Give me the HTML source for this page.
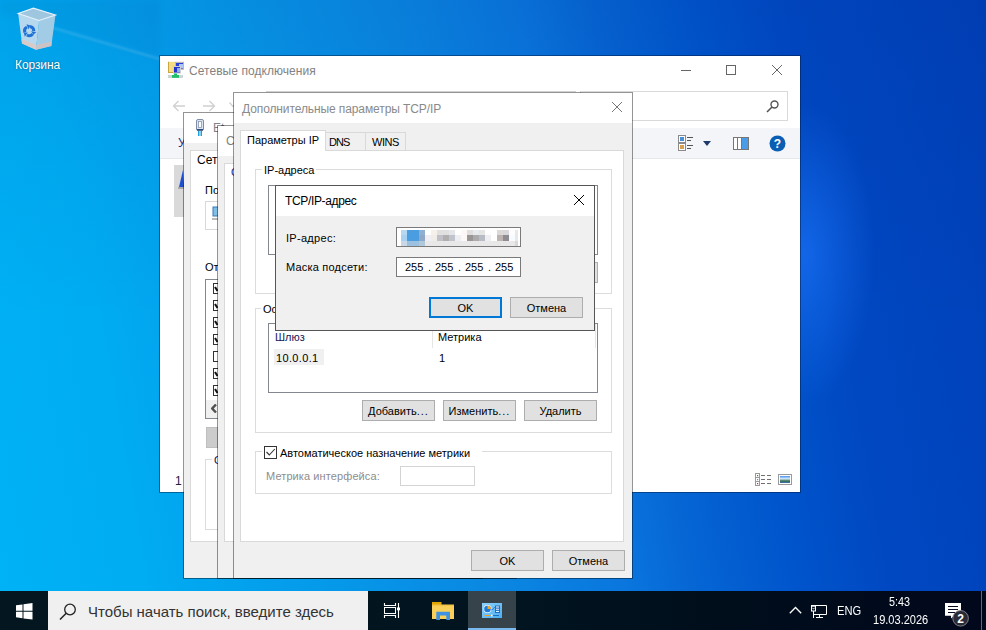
<!DOCTYPE html>
<html><head><meta charset="utf-8">
<style>
*{box-sizing:border-box;margin:0;padding:0}
html,body{width:986px;height:630px;overflow:hidden}
body{position:relative;font-family:"Liberation Sans",sans-serif;font-size:11px;color:#000;
background:linear-gradient(80deg,#00b2f6 0px,#00acf2 150px,#0a88e2 490px,#0a76de 623px,#0666d4 690px,#0055cc 790px,#0048c2 885px,#0040b8 1074px);}
.a{position:absolute}
.t{position:absolute;white-space:nowrap;line-height:1}
.btn{position:absolute;background:#e1e1e1;border:1px solid #adadad;text-align:center;line-height:19px;padding-top:1px;font-size:11px;color:#000;white-space:nowrap}
.gb{position:absolute;border:1px solid #dcdcdc}
.lb{position:absolute;border:1px solid #828790;background:#fff}
.ttl{position:absolute;white-space:nowrap;line-height:1;font-size:12px;letter-spacing:-0.1px}
</style></head><body>

<!-- desktop glow -->
<div class="a" style="left:0;top:0;width:986px;height:591px;background:linear-gradient(180deg,rgba(0,30,120,.08) 0px,rgba(0,30,120,0) 320px)"></div>
<svg class="a" style="left:0;top:0" width="986" height="300" viewBox="0 0 986 300"><defs><filter id="bl" x="-10%" y="-50%" width="120%" height="200%"><feGaussianBlur stdDeviation="1"/></filter><filter id="bl2"><feGaussianBlur stdDeviation="3"/></filter></defs><path d="M0 0H160V58L57 29L0 14Z" fill="rgba(0,20,90,.04)" filter="url(#bl2)"/><path d="M30 21L57 29L170 62" stroke="rgba(255,255,255,.16)" stroke-width="2" fill="none" filter="url(#bl)"/></svg>
<div class="a" style="left:0;top:0;width:986px;height:591px;background:radial-gradient(ellipse 70px 150px at 805px 255px,rgba(30,120,255,.6),rgba(30,120,255,0) 100%)"></div>


<!-- recycle bin -->
<svg class="a" style="left:14px;top:4px" width="46" height="48" viewBox="0 0 46 48">
 <path d="M4.2 9.5L19.4 4.2L41.5 11L25.1 16.4Z" fill="#9fc6df"/>
 <path d="M4.2 9.5L25.1 16.4L22 45.7L8 39.6Z" fill="#b6d8ee"/>
 <path d="M25.1 16.4L41.5 11L37.3 41.9L22 45.7Z" fill="#a2cbe6"/>
 <path d="M7.4 35L22.6 41L22 45.7L8 39.6Z" fill="#d8cac8"/>
 <path d="M22.6 41L37.8 37.5L37.3 41.9L22 45.7Z" fill="#cdc3c4"/>
 <path d="M4.2 9.5L19.4 4.2L41.5 11L25.1 16.4Z" fill="none" stroke="#e8f4fc" stroke-width="1.1"/>
 <path d="M16.00 22.47A4.6 4.6 0 0 1 19.80 27.00" stroke="#1f72d4" stroke-width="3" fill="none"/><path d="M19.31 30.81L22.33 28.00L17.18 27.28Z" fill="#1f72d4"/><path d="M18.72 29.96A4.6 4.6 0 0 1 12.90 30.98" stroke="#1f72d4" stroke-width="3" fill="none"/><path d="M9.85 28.65L10.77 32.67L13.97 28.58Z" fill="#1f72d4"/><path d="M10.88 28.57A4.6 4.6 0 0 1 12.90 23.02" stroke="#1f72d4" stroke-width="3" fill="none"/><path d="M16.44 21.54L12.50 20.32L14.45 25.15Z" fill="#1f72d4"/>
</svg>
<div class="t" style="left:15px;top:59px;color:#fff;font-size:12px;letter-spacing:-0.1px;text-shadow:0 0 2px rgba(0,0,0,.5)">Корзина</div>

<!-- ============ explorer window ============ -->
<div class="a" style="left:160px;top:56px;width:640px;height:436px;background:#fff;box-shadow:0 0 0 1px rgba(0,20,50,.45)"></div>
<!-- title icon -->
<svg class="a" style="left:164px;top:58px" width="26" height="24" viewBox="0 0 26 24">
  <rect x="4" y="3.8" width="7" height="11" fill="#f4dc84"/><rect x="4" y="3.8" width="1" height="11" fill="#c9a640"/><rect x="4" y="14" width="7" height="1" fill="#c9a640"/>
  <rect x="11" y="3.8" width="9" height="8" fill="#b8b8b8"/><rect x="12" y="5" width="7" height="5.5" fill="#2b3fd8"/><rect x="15" y="6" width="4" height="4" fill="#a9c8f8"/>
  <rect x="9" y="8" width="8" height="7.6" fill="#cfcfcf"/><rect x="10" y="9" width="6" height="5.5" fill="#2233d0"/><rect x="13" y="10" width="3" height="4" fill="#8eb0f0"/>
  <rect x="4" y="17" width="15" height="3" fill="#cdd2d6"/>
  <rect x="10" y="15.5" width="3" height="2" fill="#1fbf6a"/><rect x="8" y="17" width="7" height="2.8" fill="#1fbf6a"/>
</svg>
<div class="ttl" style="left:189px;top:65px;color:#828282;letter-spacing:0.05px">Сетевые подключения</div>
<!-- window controls -->
<div class="a" style="left:681px;top:70px;width:10px;height:1px;background:#666"></div>
<div class="a" style="left:726px;top:65px;width:10px;height:10px;border:1px solid #666"></div>
<svg class="a" style="left:772px;top:65px" width="10" height="10" viewBox="0 0 10 10"><path d="M0 0L10 10M10 0L0 10" stroke="#666" stroke-width="1"/></svg>
<!-- nav arrows -->
<svg class="a" style="left:172px;top:100px" width="14" height="12" viewBox="0 0 14 12"><path d="M13 6H1.5M6.5 1L1.5 6L6.5 11" stroke="#d0d0d0" stroke-width="1.3" fill="none"/></svg>
<svg class="a" style="left:202px;top:100px" width="14" height="12" viewBox="0 0 14 12"><path d="M1 6H12.5M7.5 1L12.5 6L7.5 11" stroke="#d0d0d0" stroke-width="1.3" fill="none"/></svg>
<svg class="a" style="left:229px;top:102px" width="8" height="6" viewBox="0 0 8 6"><path d="M0.5 0.5L4 4.5L7.5 0.5" stroke="#d0d0d0" stroke-width="1.2" fill="none"/></svg>
<div class="a" style="left:266px;top:91px;width:310px;height:1px;background:#d0d0d0"></div>
<!-- search box -->
<div class="a" style="left:580px;top:91px;width:208px;height:30px;border:1px solid #d9d9d9;background:#fff"></div>
<svg class="a" style="left:766px;top:100px" width="13" height="13" viewBox="0 0 13 13"><circle cx="8.5" cy="4.5" r="3.5" stroke="#555" stroke-width="1.4" fill="none"/><path d="M6 7L1 12" stroke="#555" stroke-width="1.6"/></svg>
<!-- toolbar -->
<div class="a" style="left:160px;top:128px;width:640px;height:31px;background:#f3f5f8;border-bottom:1px solid #e5e7ea"></div>
<div class="t" style="left:178px;top:137px;color:#1e3287;font-size:12px">У</div>
<!-- view icon -->
<svg class="a" style="left:678px;top:135px" width="16" height="16" viewBox="0 0 16 16">
 <rect x="0.5" y="0.5" width="7" height="7" fill="#fff" stroke="#8a8a8a"/><rect x="2" y="2" width="4" height="4" fill="#4a8ed8"/>
 <rect x="0.5" y="8.5" width="7" height="7" fill="#fff" stroke="#8a8a8a"/><rect x="2" y="10" width="4" height="4" fill="#d9a14b"/>
 <rect x="9" y="2" width="6" height="1" fill="#555"/><rect x="9" y="5" width="4" height="1" fill="#555"/>
 <rect x="9" y="10" width="6" height="1" fill="#555"/><rect x="9" y="13" width="4" height="1" fill="#555"/>
</svg>
<svg class="a" style="left:703px;top:141px" width="8" height="5" viewBox="0 0 8 5"><path d="M0 0H8L4 5Z" fill="#1f3a6a"/></svg>
<!-- preview pane icon -->
<svg class="a" style="left:733px;top:137px" width="16" height="13" viewBox="0 0 16 13">
 <rect x="0.5" y="0.5" width="15" height="12" fill="#fff" stroke="#777"/><rect x="9" y="1" width="6" height="11" fill="#4a9be8"/><rect x="4" y="1" width="1" height="11" fill="#777"/><rect x="8" y="1" width="1" height="11" fill="#777"/>
</svg>
<!-- help -->
<svg class="a" style="left:769px;top:135px" width="17" height="17" viewBox="0 0 17 17"><circle cx="8.5" cy="8.5" r="8" fill="#0a5fb4"/><text x="8.5" y="13" text-anchor="middle" font-family="Liberation Sans" font-weight="bold" font-size="12" fill="#fff">?</text></svg>
<!-- left selected item -->
<div class="a" style="left:174px;top:165px;width:20px;height:52px;background:#d9d9d9"></div>
<svg class="a" style="left:178px;top:169px" width="8" height="22" viewBox="0 0 8 22"><path d="M5 1L1 18L6 19Z" fill="#1f4fd0"/><rect x="0" y="18" width="6" height="2" fill="#aaa"/></svg>
<div class="t" style="left:175px;top:475px;color:#202040;font-size:12px">1</div>
<!-- status icons -->
<svg class="a" style="left:755px;top:473px" width="17" height="13" viewBox="0 0 17 13">
 <rect x="0.5" y="0.5" width="4" height="12" fill="#fff" stroke="#9a9a9a"/><path d="M0.5 4.5H4.5M0.5 8.5H4.5" stroke="#9a9a9a"/>
 <rect x="2" y="2" width="1.2" height="1.2" fill="#3a7a5a"/><rect x="2" y="6" width="1.2" height="1.2" fill="#4a90f0"/><rect x="2" y="10" width="1.2" height="1.2" fill="#e02020"/>
 <rect x="6" y="2" width="4" height="1" fill="#707070"/><rect x="12" y="2" width="4" height="1" fill="#707070"/>
 <rect x="6" y="6" width="4" height="1" fill="#707070"/><rect x="12" y="6" width="4" height="1" fill="#707070"/>
 <rect x="6" y="10" width="4" height="1" fill="#707070"/><rect x="12" y="10" width="4" height="1" fill="#707070"/>
</svg>
<svg class="a" style="left:778px;top:474px" width="14" height="11" viewBox="0 0 14 11"><defs><linearGradient id="pg" x1="0" y1="0" x2="0" y2="1"><stop offset="0" stop-color="#4a90f0"/><stop offset=".4" stop-color="#d8ecf8"/><stop offset=".7" stop-color="#3a7050"/><stop offset="1" stop-color="#3a70b0"/></linearGradient></defs><rect x="0.5" y="0.5" width="13" height="10" fill="#fff" stroke="#9a9a9a"/><rect x="2" y="2" width="10" height="7" fill="url(#pg)"/></svg>

<!-- ============ Ethernet properties dialog ============ -->
<div class="a" style="left:183px;top:112px;width:300px;height:467px;background:#f0f0f0;border:1px solid rgba(0,0,0,.42);background-clip:padding-box"></div>
<div class="a" style="left:184px;top:113px;width:298px;height:30px;background:#fff"></div>
<svg class="a" style="left:196px;top:119px" width="8" height="17" viewBox="0 0 8 17"><rect x="0.5" y="0.5" width="7" height="11" rx="1.5" fill="#dde5f0" stroke="#7e8ca4"/><rect x="2.5" y="2.5" width="3" height="6" fill="#fafcff" stroke="#8a98b0" stroke-width=".8"/><rect x="1" y="10" width="6" height="1.5" fill="#2a4a80"/><rect x="2" y="12" width="1.5" height="5" fill="#1aa0e0"/><rect x="4.5" y="12" width="1.5" height="5" fill="#1aa0e0"/></svg>
<div class="ttl" style="left:213px;top:122px;color:#828282">Et</div>
<div class="a" style="left:190px;top:150px;width:280px;height:392px;background:#fff;border:1px solid #d9d9d9"></div>
<div class="t" style="left:197px;top:154px;font-size:12px">Сеть</div>
<div class="t" style="left:205px;top:185px">Подключение</div>
<div class="a" style="left:205px;top:201px;width:100px;height:29px;border:1px solid #d9d9d9"></div>
<svg class="a" style="left:212px;top:205px" width="10" height="17" viewBox="0 0 10 17"><rect x="1" y="2" width="8" height="9" fill="#7fbfe8" stroke="#3a7ab8"/><rect x="0" y="13" width="6" height="2" fill="#bbb"/><rect x="6" y="13" width="3" height="2" fill="#3cb04a"/></svg>
<div class="t" style="left:205px;top:262px">Отмеченные</div>
<div class="lb" style="left:205px;top:279px;width:100px;height:140px"></div>
<div class="a" style="left:206px;top:400px;width:98px;height:18px;background:#f0f0f0"></div>
<svg class="a" style="left:211px;top:404px" width="6" height="9" viewBox="0 0 6 9"><path d="M5 0.5L1.2 4.5L5 8.5" stroke="#505050" stroke-width="2.4" fill="none"/></svg>
<div class="a" style="left:213px;top:283px;width:11px;height:11px;border:1px solid #333;background:#fff"></div>
<svg class="a" style="left:214px;top:284px" width="9" height="9" viewBox="0 0 9 9"><path d="M1 3L3.5 7" stroke="#111" stroke-width="2"/></svg>
<div class="a" style="left:213px;top:300px;width:11px;height:11px;border:1px solid #333;background:#fff"></div>
<svg class="a" style="left:214px;top:301px" width="9" height="9" viewBox="0 0 9 9"><path d="M1 3L3.5 7" stroke="#111" stroke-width="2"/></svg>
<div class="a" style="left:213px;top:317px;width:11px;height:11px;border:1px solid #333;background:#fff"></div>
<svg class="a" style="left:214px;top:318px" width="9" height="9" viewBox="0 0 9 9"><path d="M1 3L3.5 7" stroke="#111" stroke-width="2"/></svg>
<div class="a" style="left:213px;top:334px;width:11px;height:11px;border:1px solid #333;background:#fff"></div>
<svg class="a" style="left:214px;top:335px" width="9" height="9" viewBox="0 0 9 9"><path d="M1 3L3.5 7" stroke="#111" stroke-width="2"/></svg>
<div class="a" style="left:213px;top:351px;width:11px;height:11px;border:1px solid #333;background:#fff"></div>
<div class="a" style="left:213px;top:368px;width:11px;height:11px;border:1px solid #333;background:#fff"></div>
<svg class="a" style="left:214px;top:369px" width="9" height="9" viewBox="0 0 9 9"><path d="M1 3L3.5 7" stroke="#111" stroke-width="2"/></svg>
<div class="a" style="left:213px;top:385px;width:11px;height:11px;border:1px solid #333;background:#fff"></div>
<svg class="a" style="left:214px;top:386px" width="9" height="9" viewBox="0 0 9 9"><path d="M1 3L3.5 7" stroke="#111" stroke-width="2"/></svg>
<div class="a" style="left:206px;top:427px;width:80px;height:21px;background:#cccccc;border:1px solid #bfbfbf"></div>
<div class="gb" style="left:205px;top:459px;width:100px;height:71px"></div>
<div class="t" style="left:212px;top:455px;background:#fff;padding:0 2px;color:#16165a">Описание</div>

<!-- ============ IPv4 properties dialog ============ -->
<div class="a" style="left:217px;top:125px;width:300px;height:454px;background:#f0f0f0;border:1px solid rgba(0,0,0,.42);background-clip:padding-box"></div>
<div class="a" style="left:218px;top:126px;width:298px;height:30px;background:#fff"></div>
<div class="ttl" style="left:226px;top:135px;color:#828282">Свойства</div>
<div class="a" style="left:224px;top:163px;width:280px;height:379px;background:#fff;border:1px solid #d9d9d9"></div>
<div class="t" style="left:231px;top:167px;color:#1e3287">Общие</div>

<!-- ============ Advanced TCP/IP dialog ============ -->
<div class="a" style="left:233px;top:92px;width:400px;height:487px;background:#f0f0f0;border:1px solid rgba(0,0,0,.42);background-clip:padding-box"></div>
<div class="a" style="left:234px;top:93px;width:398px;height:30px;background:#fff"></div>
<div class="ttl" style="left:242px;top:103px;color:#8a8a8a">Дополнительные параметры TCP/IP</div>
<svg class="a" style="left:612px;top:102px" width="10" height="10" viewBox="0 0 10 10"><path d="M0 0L10 10M10 0L0 10" stroke="#777" stroke-width="1"/></svg>
<!-- tabs -->
<div class="a" style="left:325px;top:132px;width:41px;height:19px;background:#f0f0f0;border:1px solid #d9d9d9"></div>
<div class="a" style="left:365px;top:132px;width:41px;height:19px;background:#f0f0f0;border:1px solid #d9d9d9"></div>
<div class="a" style="left:240px;top:150px;width:384px;height:392px;background:#fff;border:1px solid #d9d9d9"></div>
<div class="a" style="left:240px;top:130px;width:86px;height:21px;background:#fff;border:1px solid #d9d9d9;border-bottom:none"></div>
<div class="t" style="left:247px;top:135px">Параметры IP</div>
<div class="t" style="left:329px;top:137px;letter-spacing:-0.9px">DNS</div>
<div class="t" style="left:372px;top:137px;letter-spacing:-0.5px">WINS</div>
<!-- group IP addresses -->
<div class="gb" style="left:255px;top:169px;width:357px;height:125px"></div>
<div class="t" style="left:262px;top:165px;background:#fff;padding:0 2px">IP-адреса</div>
<div class="lb" style="left:268px;top:185px;width:330px;height:70px"></div>
<div class="btn" style="left:524px;top:262px;width:74px;height:21px"></div>
<!-- group gateways -->
<div class="gb" style="left:255px;top:308px;width:357px;height:125px"></div>
<div class="t" style="left:261px;top:304px;background:#fff;padding:0 2px">Основные шлюзы:</div>
<div class="lb" style="left:268px;top:323px;width:330px;height:70px"></div>
<div class="a" style="left:432px;top:324px;width:1px;height:24px;background:#e5e5e5"></div>
<div class="a" style="left:595px;top:324px;width:1px;height:24px;background:#e5e5e5"></div>
<div class="t" style="left:275px;top:332px;color:#16165a">Шлюз</div>
<div class="t" style="left:438px;top:332px;color:#000">Метрика</div>
<div class="a" style="left:274px;top:349px;width:50px;height:16px;background:#f0f0f0"></div>
<div class="t" style="left:276px;top:353px;letter-spacing:0.35px">10.0.0.1</div>
<div class="t" style="left:439px;top:353px">1</div>
<div class="btn" style="left:362px;top:400px;width:73px;height:21px">Добавить<span style="letter-spacing:1px">...</span></div>
<div class="btn" style="left:443px;top:400px;width:73px;height:21px">Изменить<span style="letter-spacing:1px">...</span></div>
<div class="btn" style="left:524px;top:400px;width:73px;height:21px">Удалить</div>
<!-- group metric -->
<div class="gb" style="left:255px;top:451px;width:357px;height:43px"></div>
<div class="a" style="left:262px;top:444px;width:220px;height:16px;background:#fff"></div>
<div class="a" style="left:264px;top:446px;width:13px;height:13px;border:1px solid #333;background:#fff"></div>
<svg class="a" style="left:265px;top:447px" width="11" height="11" viewBox="0 0 11 11"><path d="M1.5 5L4.3 8L9.8 2" stroke="#333" stroke-width="1.1" fill="none"/></svg>
<div class="t" style="left:280px;top:448px">Автоматическое назначение метрики</div>
<div class="t" style="left:266px;top:471px;color:#8d8d8d;letter-spacing:0.1px">Метрика интерфейса:</div>
<div class="a" style="left:400px;top:466px;width:75px;height:20px;border:1px solid #d4d4d4;background:#fff"></div>
<div class="btn" style="left:471px;top:550px;width:73px;height:21px">OK</div>
<div class="btn" style="left:552px;top:550px;width:73px;height:21px">Отмена</div>

<!-- ============ TCP/IP address dialog ============ -->
<div class="a" style="left:275px;top:185px;width:320px;height:146px;background:#f0f0f0;border:1px solid #555"></div>
<div class="a" style="left:276px;top:186px;width:318px;height:30px;background:#fff"></div>
<div class="ttl" style="left:285px;top:195px;color:#000;letter-spacing:-0.35px">TCP/IP-адрес</div>
<svg class="a" style="left:574px;top:195px" width="10" height="10" viewBox="0 0 10 10"><path d="M0 0L10 10M10 0L0 10" stroke="#000" stroke-width="1"/></svg>
<div class="t" style="left:286px;top:233px;letter-spacing:0.3px">IP-адрес:</div>
<div class="a" style="left:396px;top:227px;width:125px;height:20px;border:1px solid #7a7a7a;background:#fff"></div>
<div class="a" style="left:401px;top:230px;width:6px;height:5px;background:#b8d8f2"></div>
<div class="a" style="left:407px;top:230px;width:6px;height:5px;background:#4a9de0"></div>
<div class="a" style="left:413px;top:230px;width:6px;height:5px;background:#4a9de0"></div>
<div class="a" style="left:419px;top:230px;width:6px;height:5px;background:#8fb0d0"></div>
<div class="a" style="left:425px;top:230px;width:6px;height:5px;background:#ffffff"></div>
<div class="a" style="left:431px;top:230px;width:6px;height:5px;background:#f5f0ea"></div>
<div class="a" style="left:437px;top:230px;width:6px;height:5px;background:#e0e0e0"></div>
<div class="a" style="left:443px;top:230px;width:6px;height:5px;background:#e0e0e0"></div>
<div class="a" style="left:449px;top:230px;width:6px;height:5px;background:#e5e6ea"></div>
<div class="a" style="left:455px;top:230px;width:6px;height:5px;background:#ffffff"></div>
<div class="a" style="left:461px;top:230px;width:6px;height:5px;background:#fdf8f5"></div>
<div class="a" style="left:467px;top:230px;width:6px;height:5px;background:#e0dedf"></div>
<div class="a" style="left:473px;top:230px;width:6px;height:5px;background:#e8ecef"></div>
<div class="a" style="left:479px;top:230px;width:6px;height:5px;background:#e5e5e5"></div>
<div class="a" style="left:485px;top:230px;width:6px;height:5px;background:#ffffff"></div>
<div class="a" style="left:491px;top:230px;width:6px;height:5px;background:#ffffff"></div>
<div class="a" style="left:497px;top:230px;width:6px;height:5px;background:#ddd8d8"></div>
<div class="a" style="left:503px;top:230px;width:6px;height:5px;background:#d8d8dc"></div>
<div class="a" style="left:509px;top:230px;width:6px;height:5px;background:#fdfdfd"></div>
<div class="a" style="left:515px;top:230px;width:3px;height:5px;background:#e8e8e8"></div>
<div class="a" style="left:401px;top:235px;width:6px;height:6px;background:#a8d0f0"></div>
<div class="a" style="left:407px;top:235px;width:6px;height:6px;background:#4a9de0"></div>
<div class="a" style="left:413px;top:235px;width:6px;height:6px;background:#4a9de0"></div>
<div class="a" style="left:419px;top:235px;width:6px;height:6px;background:#8fa8c8"></div>
<div class="a" style="left:425px;top:235px;width:6px;height:6px;background:#f0eef2"></div>
<div class="a" style="left:431px;top:235px;width:6px;height:6px;background:#f0ece8"></div>
<div class="a" style="left:437px;top:235px;width:6px;height:6px;background:#c0c0c6"></div>
<div class="a" style="left:443px;top:235px;width:6px;height:6px;background:#b0aeae"></div>
<div class="a" style="left:449px;top:235px;width:6px;height:6px;background:#c0c4cc"></div>
<div class="a" style="left:455px;top:235px;width:6px;height:6px;background:#efeef2"></div>
<div class="a" style="left:461px;top:235px;width:6px;height:6px;background:#fdf8f5"></div>
<div class="a" style="left:467px;top:235px;width:6px;height:6px;background:#9a9696"></div>
<div class="a" style="left:473px;top:235px;width:6px;height:6px;background:#acacae"></div>
<div class="a" style="left:479px;top:235px;width:6px;height:6px;background:#b8bcc4"></div>
<div class="a" style="left:485px;top:235px;width:6px;height:6px;background:#efeef2"></div>
<div class="a" style="left:491px;top:235px;width:6px;height:6px;background:#ffffff"></div>
<div class="a" style="left:497px;top:235px;width:6px;height:6px;background:#bcb4b2"></div>
<div class="a" style="left:503px;top:235px;width:6px;height:6px;background:#8e8c90"></div>
<div class="a" style="left:509px;top:235px;width:6px;height:6px;background:#f5fbff"></div>
<div class="a" style="left:515px;top:235px;width:3px;height:6px;background:#e8e8e8"></div>
<div class="a" style="left:401px;top:241px;width:6px;height:5px;background:#c8d8e6"></div>
<div class="a" style="left:407px;top:241px;width:6px;height:5px;background:#9cc0e0"></div>
<div class="a" style="left:413px;top:241px;width:6px;height:5px;background:#9cc0e0"></div>
<div class="a" style="left:419px;top:241px;width:6px;height:5px;background:#b0c8da"></div>
<div class="a" style="left:425px;top:241px;width:6px;height:5px;background:#e8e8e8"></div>
<div class="a" style="left:431px;top:241px;width:6px;height:5px;background:#e8e8e8"></div>
<div class="a" style="left:437px;top:241px;width:6px;height:5px;background:#e8e8e8"></div>
<div class="a" style="left:443px;top:241px;width:6px;height:5px;background:#e8e8e8"></div>
<div class="a" style="left:449px;top:241px;width:6px;height:5px;background:#e8e8e8"></div>
<div class="a" style="left:455px;top:241px;width:6px;height:5px;background:#e8e8e8"></div>
<div class="a" style="left:461px;top:241px;width:6px;height:5px;background:#e8e8e8"></div>
<div class="a" style="left:467px;top:241px;width:6px;height:5px;background:#e8e8e8"></div>
<div class="a" style="left:473px;top:241px;width:6px;height:5px;background:#e8e8e8"></div>
<div class="a" style="left:479px;top:241px;width:6px;height:5px;background:#e8e8e8"></div>
<div class="a" style="left:485px;top:241px;width:6px;height:5px;background:#e8e8e8"></div>
<div class="a" style="left:491px;top:241px;width:6px;height:5px;background:#e8e8e8"></div>
<div class="a" style="left:497px;top:241px;width:6px;height:5px;background:#e8e8e8"></div>
<div class="a" style="left:503px;top:241px;width:6px;height:5px;background:#e8e8e8"></div>
<div class="a" style="left:509px;top:241px;width:6px;height:5px;background:#e8e8e8"></div>
<div class="a" style="left:515px;top:241px;width:3px;height:5px;background:#d8d8d8"></div>
<div class="t" style="left:286px;top:262px;letter-spacing:0.2px">Маска подсети:</div>
<div class="a" style="left:396px;top:257px;width:125px;height:20px;border:1px solid #7a7a7a;background:#fff"></div>
<div class="t" style="left:405px;top:262px">255</div><div class="t" style="left:428px;top:262px">.</div><div class="t" style="left:435px;top:262px">255</div><div class="t" style="left:458px;top:262px">.</div><div class="t" style="left:465px;top:262px">255</div><div class="t" style="left:488px;top:262px">.</div><div class="t" style="left:495px;top:262px">255</div>
<div class="btn" style="left:429px;top:297px;width:73px;height:21px;border:2px solid #0078d7;line-height:17px;padding-top:1px">OK</div>
<div class="btn" style="left:510px;top:297px;width:73px;height:21px">Отмена</div>

<!-- ============ taskbar ============ -->
<div class="a" style="left:0;top:591px;width:986px;height:39px;background:linear-gradient(90deg,#041720 0px,#01141f 520px,#000c1b 780px,#02081c 986px)"></div>
<svg class="a" style="left:16px;top:603px" width="17" height="17" viewBox="0 0 17 17"><path d="M0 2.3L6.5 1.4V7.8H0Z M7.5 1.2L16.5 0V7.8H7.5Z M0 8.8H6.5V15.2L0 14.3Z M7.5 8.8H16.5V16.6L7.5 15.4Z" fill="#fff"/></svg>
<div class="a" style="left:48px;top:591px;width:320px;height:39px;background:#f0f0f0"></div>
<svg class="a" style="left:59px;top:603px" width="18" height="17" viewBox="0 0 18 17"><circle cx="11" cy="6.5" r="5.3" stroke="#222" stroke-width="1.3" fill="none"/><path d="M7.2 10.3L1 16.5" stroke="#222" stroke-width="1.5"/></svg>
<div class="t" style="left:88px;top:604px;font-size:15px;color:#333">Чтобы начать поиск, введите здесь</div>
<svg class="a" style="left:383px;top:602px" width="18" height="17" viewBox="0 0 18 17"><path d="M1.5 1V3.5H12.5V1M1.5 16V13.5H12.5V16" stroke="#fff" stroke-width="1.1" fill="none"/><rect x="1.5" y="5.5" width="11" height="6" stroke="#fff" stroke-width="1" fill="none"/><path d="M15.5 1V16" stroke="#fff" stroke-width="1.1"/><rect x="14" y="5.5" width="3" height="2.8" fill="#fff"/></svg>
<svg class="a" style="left:432px;top:601px" width="22" height="20" viewBox="0 0 22 20"><rect x="0" y="1" width="9.5" height="3.5" fill="#e0a400"/><rect x="0" y="3.7" width="22" height="14.3" fill="#f8cf58"/><rect x="0" y="3.7" width="22" height="1" fill="#f0bc40"/><path d="M4.3 19V10.8H18V19H14.3V14.5H8V19Z" fill="#3d92e3"/></svg>
<div class="a" style="left:468px;top:591px;width:48px;height:39px;background:#36434b"></div>
<div class="a" style="left:468px;top:628px;width:48px;height:2px;background:#7ab8ee"></div>
<svg class="a" style="left:482px;top:603px" width="20" height="15" viewBox="0 0 20 15"><defs><linearGradient id="cpg" x1="0" y1="0" x2="1" y2="1"><stop offset="0" stop-color="#8fd2fb"/><stop offset="1" stop-color="#4aaef0"/></linearGradient></defs><rect x="0" y="0" width="20" height="15" fill="url(#cpg)"/><circle cx="5.5" cy="6" r="4" fill="#eaf6ff"/><circle cx="5.5" cy="6" r="3.3" fill="#1e7ad6"/><path d="M5.5 6V2.7A3.3 3.3 0 0 1 8.8 6Z" fill="#f5a623"/><path d="M9.5 6.5H11L12 4.5H13" stroke="#1e7ad6" stroke-width="0.8" fill="none"/><rect x="13" y="2.5" width="5" height="7.5" fill="#1e6fc4"/><rect x="14" y="3.5" width="3" height="1" fill="#fff"/><rect x="14" y="5.7" width="3" height="1" fill="#fff"/><rect x="14" y="7.9" width="3" height="1" fill="#fff"/><rect x="2.5" y="12" width="6" height="1" fill="#f0a020"/><rect x="9" y="11.5" width="1.5" height="2" fill="#eaf6ff"/><rect x="11" y="12" width="6" height="1" fill="#1e6fc4"/></svg>
<svg class="a" style="left:789px;top:606px" width="13" height="8" viewBox="0 0 13 8"><path d="M0.8 7.2L6.5 1.5L12.2 7.2" stroke="#fff" stroke-width="1.3" fill="none"/></svg>
<svg class="a" style="left:810px;top:604px" width="18" height="15" viewBox="0 0 18 15"><path d="M5 1.5H16.5V10.5H4" stroke="#fff" stroke-width="1" fill="none"/><rect x="1.5" y="1.5" width="4" height="5.5" stroke="#fff" stroke-width="1" fill="#000c1b"/><rect x="1.5" y="1.5" width="4" height="1.2" fill="#fff"/><path d="M2.5 3.8L3.5 5.2L4.5 3.8" stroke="#fff" stroke-width="0.8" fill="none"/><path d="M3.5 7V14M9.5 10.5V13M6 13.5H13" stroke="#fff" stroke-width="1" fill="none"/></svg>
<div class="t" style="left:837px;top:605px;font-size:12px;color:#fff;transform:scaleX(0.93);transform-origin:0 0">ENG</div>
<div class="t" style="left:889px;top:596px;font-size:12px;color:#fff;transform:scaleX(0.9);transform-origin:0 0">5:43</div>
<div class="t" style="left:873px;top:614px;font-size:12px;color:#fff;transform:scaleX(0.92);transform-origin:0 0">19.03.2026</div>
<svg class="a" style="left:944px;top:602px" width="27" height="27" viewBox="0 0 27 27"><path d="M1 1H17V13.8H10L7 16.5V13.8H1Z" fill="#fff"/><path d="M4 4.5H14M4 7.5H14M4 10.5H11" stroke="#04091c" stroke-width="1"/><circle cx="16.6" cy="16.3" r="7.8" fill="#2a2b36" stroke="#8a8c94" stroke-width="0.9"/><text x="16.6" y="20.5" text-anchor="middle" font-family="Liberation Sans" font-size="12" font-weight="bold" fill="#fff">2</text></svg>
<div class="a" style="left:981px;top:591px;width:1px;height:39px;background:#5a6a78"></div>

</body></html>
